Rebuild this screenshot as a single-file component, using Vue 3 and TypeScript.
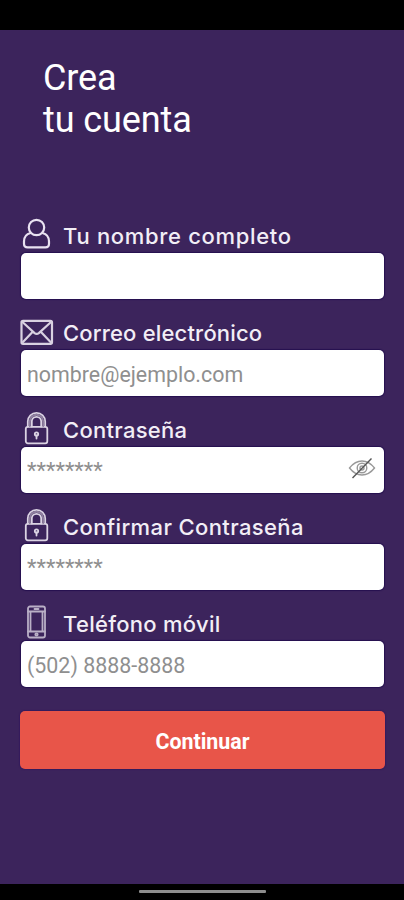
<script setup lang="ts">
import { ref } from 'vue'

type IconName = 'user' | 'mail' | 'lock' | 'phone'

interface Field {
  id: string
  label: string
  icon: IconName
  placeholder: string
  type: string
  tracking: number
}

const fields: Field[] = [
  { id: 'name', label: 'Tu nombre completo', icon: 'user', placeholder: '', type: 'text', tracking: 0.68 },
  { id: 'email', label: 'Correo electrónico', icon: 'mail', placeholder: 'nombre@ejemplo.com', type: 'email', tracking: 0.18 },
  { id: 'password', label: 'Contraseña', icon: 'lock', placeholder: '********', type: 'password', tracking: 0.27 },
  { id: 'confirm', label: 'Confirmar Contraseña', icon: 'lock', placeholder: '********', type: 'password', tracking: 0.37 },
  { id: 'phone', label: 'Teléfono móvil', icon: 'phone', placeholder: '(502) 8888-8888', type: 'tel', tracking: 0.28 },
]

const values = ref<Record<string, string>>({ name: '', email: '', password: '', confirm: '', phone: '' })
const visible = ref(false)

function inputType(field: Field): string {
  return field.id === 'password' && visible.value ? 'text' : field.type
}
</script>

<template>
  <div class="screen">
    <div class="status-bar"></div>
    <form class="form" @submit.prevent>
      <h1 class="title">Crea<br />tu cuenta</h1>
      <div v-for="field in fields" :key="field.id" class="field">
        <label class="label" :for="field.id">
          <svg v-if="field.icon === 'user'" class="icon" viewBox="0 0 34 36">
            <path d="M10.600 18C6.600 19 4 22.200 4 26.500v2.200c0 2.300 1.300 3.600 3.600 3.600h17.800c2.300 0 3.600-1.300 3.600-3.600v-2.200c0-4.300-2.600-7.500-6.600-8.500" />
            <circle cx="16.500" cy="12.500" r="7.700" />
          </svg>
          <svg v-else-if="field.icon === 'mail'" class="icon mail" viewBox="0 0 34 36">
            <rect x="1.500" y="8.800" width="30.500" height="23" rx="1.500" />
            <path d="M3 10.500l11.600 10.600q2.100 1.700 4.200 0L30.500 10.500M3 30l9.500-10M30.500 30L21 20" />
          </svg>
          <svg v-else-if="field.icon === 'lock'" class="icon lock" viewBox="0 0 34 36">
            <rect x="5.800" y="17.800" width="21.500" height="16.500" rx="2" />
            <path d="M7.800 17.500v-5a8.700 8.700 0 0 1 17.400 0v5M11.800 17.500v-5a4.700 4.700 0 0 1 9.400 0v5" />
            <path class="dome" d="M9.800 17v-4.500a6.700 6.700 0 0 1 13.400 0V17" />
            <path d="M16.500 26.500v3" />
            <circle cx="16.500" cy="25" r="1.700" />
          </svg>
          <svg v-else class="icon phone" viewBox="0 0 34 36">
            <rect x="8" y="3.500" width="17" height="31" rx="2" />
            <path d="M8 8.500h17M8 28.500h17M14.500 6h4M10.500 9v19M22.500 9v19" />
            <circle cx="16.500" cy="31.500" r="1.200" />
          </svg>
          <span class="label-text" :style="{ letterSpacing: field.tracking + 'px' }">{{ field.label }}</span>
        </label>
        <div class="box">
          <input
            :id="field.id"
            v-model="values[field.id]"
            class="input"
            :class="{ secret: field.type === 'password' }"
            :type="inputType(field)"
            :placeholder="field.placeholder"
          />
          <button v-if="field.id === 'password'" type="button" class="toggle" @click="visible = !visible">
            <svg class="eye" viewBox="0 0 28 24">
              <path d="M1.500 12Q7 5 14 5t12.500 7Q21 19 14 19T1.500 12Z" />
              <circle cx="14" cy="12" r="4.800" />
              <circle cx="14" cy="12" r="2" />
              <path class="slash" d="M4.500 22L23.500 2.500" />
            </svg>
          </button>
        </div>
      </div>
      <button class="submit" type="submit">Continuar</button>
    </form>
    <div class="nav-bar"><span class="handle"></span></div>
  </div>
</template>

<style>
body {
  margin: 0;
}
</style>

<style scoped>
.screen {
  display: flex;
  flex-direction: column;
  width: 404px;
  height: 900px;
  background: #3c245c;
  font-family: Roboto, 'Liberation Sans', sans-serif;
  overflow: hidden;
}
.status-bar {
  flex: none;
  height: 30px;
  background: #000;
}
.form {
  flex: 1;
  display: flex;
  flex-direction: column;
  padding: 27px 19px 0 20px;
}
.title {
  margin: 0 0 74px 23px;
  height: 84px;
  color: #fff;
  font-size: 36px;
  font-weight: 400;
  line-height: 42px;
  letter-spacing: -0.1px;
}
.field {
  height: 97px;
  flex: none;
}
.label {
  display: flex;
  align-items: flex-start;
  height: 38px;
}
.icon {
  flex: none;
  width: 34px;
  height: 36px;
  margin-right: 9px;
  fill: none;
  stroke: #e9e2f1;
  stroke-width: 2.2;
  stroke-linecap: round;
  stroke-linejoin: round;
}
.mail {
  stroke: #d9d1e1;
}
.lock {
  stroke: #dbd3e3;
  stroke-width: 1.8;
}
.dome {
  stroke: #8f809f;
  stroke-width: 2;
}
.phone {
  stroke: #b9afc6;
  stroke-width: 1.8;
}
.label-text {
  margin-top: 7px;
  color: #f2eef6;
  font-family: Inter, 'Open Sans', sans-serif;
  font-size: 22px;
  font-weight: 500;
  line-height: 28px;
  white-space: nowrap;
}
.box {
  display: flex;
  align-items: center;
  box-sizing: border-box;
  height: 46px;
  margin: 0 0 0 1px;
  width: 363px;
  padding: 0 8px 0 6px;
  border-radius: 5px;
  background: #fff;
  box-shadow: 0 0 1px 1px #25104f;
}
.input {
  flex: 1;
  min-width: 0;
  padding: 2px 0 0;
  border: 0;
  outline: 0;
  background: transparent;
  color: #333;
  font-family: Roboto, 'Liberation Sans', sans-serif;
  font-size: 21.4px;
}
.input::placeholder {
  color: #8f8f8f;
  opacity: 1;
}
.secret {
  padding-top: 0;
  font-size: 22px;
}
.toggle {
  display: flex;
  margin-top: -4px;
  padding: 0;
  border: 0;
  background: none;
}
.eye {
  width: 28px;
  height: 24px;
  fill: none;
  stroke: #999;
  stroke-width: 1.4;
}
.slash {
  stroke: #555;
}
.submit {
  flex: none;
  height: 58px;
  margin-top: 11px;
  padding: 2px 0 0;
  border: 0;
  border-radius: 5px;
  background: #e85549;
  box-shadow: 0 0 1px 1px #351b5c;
  color: #fff;
  font-family: Roboto, 'Liberation Sans', sans-serif;
  font-size: 21.4px;
  font-weight: 700;
}
.nav-bar {
  flex: none;
  display: flex;
  justify-content: center;
  box-sizing: border-box;
  height: 16px;
  padding-top: 6px;
  background: #000;
}
.handle {
  width: 127px;
  height: 3px;
  border-radius: 1px;
  background: #8d8d8d;
}
</style>
